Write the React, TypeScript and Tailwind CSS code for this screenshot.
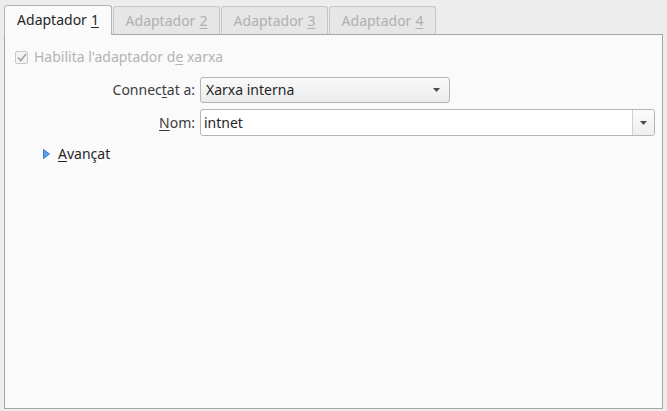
import React from 'react';

const tabs = ['1', '2', '3', '4'];

const Arrow = () => (
  <svg width="7" height="4" viewBox="0 0 7 4" className="fill-[#4a4a4a]">
    <path d="M0 0h7L3.5 4z" />
  </svg>
);

export default function App() {
  return (
    <div
      className="flex h-[411px] w-[667px] flex-col bg-[#ededed] px-1 pt-1 pb-[2px] text-[14px] leading-[16px] text-[#3c3c3c]"
      style={{ fontFamily: '"Noto Sans", "Open Sans", sans-serif' }}
    >
      <div className="flex h-[30px] items-end">
        {tabs.map((n, i) =>
          i === 0 ? (
            <div
              key={n}
              className="relative z-10 -mb-px flex h-[30px] w-[108px] items-center justify-center rounded-t-[3px] border border-b-0 border-[#b4b4b4] bg-[#fafafa] pb-px text-[#262626]"
            >
              Adaptador <span className="ml-1 underline underline-offset-2">{n}</span>
            </div>
          ) : (
            <div
              key={n}
              className="ml-px flex h-[28px] w-[107px] items-center justify-center rounded-t-[3px] border border-b-0 border-[#c6c6c6] bg-[#e6e6e6] text-[#b0b0b0]"
            >
              Adaptador <span className="ml-1 underline underline-offset-2">{n}</span>
            </div>
          )
        )}
      </div>
      <div className="flex flex-1 flex-col border border-[#a6a6a6] bg-[#fafafa] pt-[15px] pr-[7px]">
        <label className="flex h-[14px] items-center pl-[10px] text-[#b3b3b3]">
          <span className="flex h-[13px] w-[13px] items-center justify-center rounded-[2px] border border-[#c8c8c8] bg-[#f4f4f4]">
            <svg width="10" height="9" viewBox="0 0 10 9">
              <path d="M1 4.5l2.8 3L9 1" fill="none" stroke="#a8a8a8" strokeWidth="1.8" />
            </svg>
          </span>
          <span className="ml-[6px]">
            Habilita l'adaptador d<span className="underline underline-offset-2">e</span> xarxa
          </span>
        </label>

        <div className="mt-[13px] flex items-center">
          <div className="w-[190px] text-right">
            Connec<span className="underline underline-offset-2">t</span>at a:
          </div>
          <div className="ml-[5px] flex h-[26px] w-[250px] items-center justify-between rounded-[3px] border border-[#b5b5b5] bg-gradient-to-b from-[#f9f9f9] to-[#ececec] pl-[5px] pr-[9px] text-[#262626]">
            <span>Xarxa interna</span>
            <Arrow />
          </div>
        </div>

        <div className="mt-[6px] flex items-center">
          <div className="w-[190px] text-right">
            <span className="underline underline-offset-2">N</span>om:
          </div>
          <div className="ml-[5px] flex h-[27px] flex-1 items-stretch rounded-[3px] border border-[#b5b5b5] bg-white text-[#262626]">
            <div className="flex flex-1 items-center pl-[3px]">intnet</div>
            <div className="flex w-[22px] items-center justify-center rounded-r-[3px] border-l border-[#d0d0d0] bg-gradient-to-b from-[#fbfbfb] to-[#eeeeee]">
              <Arrow />
            </div>
          </div>
        </div>

        <div className="mt-[11px] flex h-[14px] items-center pl-[38px] text-[#262626]">
          <svg width="7" height="10" viewBox="0 0 7 10">
            <path d="M0.5 0.5L6.5 5L0.5 9.5z" fill="#5aa0e6" stroke="#2f7fd0" strokeWidth="1" />
          </svg>
          <span className="ml-[8px]">
            <span className="underline underline-offset-2">A</span>vançat
          </span>
        </div>
      </div>
    </div>
  );
}
